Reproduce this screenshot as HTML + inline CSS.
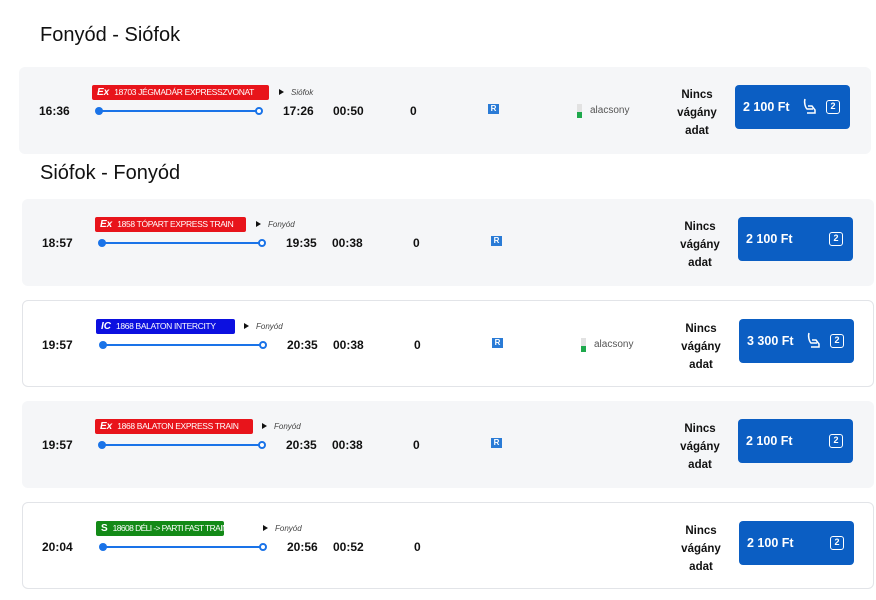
<!DOCTYPE html>
<html><head><meta charset="utf-8"><style>
*{margin:0;padding:0;box-sizing:border-box}
body{width:876px;height:600px;background:#fff;font-family:"Liberation Sans",sans-serif;position:relative;overflow:hidden;color:#111}
h1{position:absolute;font-weight:normal;font-size:20px;color:#111}
.card{position:absolute;width:852px;height:87px;border-radius:6px}
.g{background:#f5f6f8}
.w{background:#fff;border:1px solid #e2e4e8}
.card>*{position:absolute}
.t{font-size:12px;font-weight:bold;top:37px}
.badge{left:73px;top:18px;height:15px;border-radius:2px;color:#fff;font-size:8.5px;line-height:15px;padding-left:5px;white-space:nowrap;overflow:hidden;letter-spacing:-0.35px}
.badge b{font-style:italic;font-size:10px;margin-right:5px;letter-spacing:0}
.dest{top:18px;font-size:8px;font-style:italic;color:#444;line-height:15px}
.dest:before{content:"";display:inline-block;border-left:5px solid #111;border-top:3px solid transparent;border-bottom:3px solid transparent;margin-right:7px}
.line{left:79px;top:43px;width:161px;height:2px;background:#1a73e8}
.d1{left:76px;top:40px;width:8px;height:8px;border-radius:50%;background:#1a73e8}
.d2{left:236px;top:40px;width:8px;height:8px;border-radius:50%;background:#fff;border:2px solid #1a73e8}
.r{left:469px;top:37px;width:11px;height:10px;background:#2a7bd6;color:#fff;font-size:8px;font-weight:bold;text-align:center;line-height:10px}
.bar{left:558px;top:37px;width:5px;height:14px;background:#e2e2e2}
.bar:after{content:"";position:absolute;left:0;bottom:0;width:5px;height:6px;background:#1ea84c}
.al{left:571px;top:38px;font-size:10px;color:#555}
.nv{left:648px;top:19px;width:60px;text-align:center;font-size:11.5px;font-weight:bold;line-height:18px}
.btn{left:716px;top:18px;width:115px;height:44px;background:#0b5ec3;border-radius:4px;color:#fff;font-size:12.5px;font-weight:bold;line-height:44px;padding-left:8px}
.two{position:absolute;right:10px;top:15px;width:14px;height:14px;border:1.5px solid #fff;border-radius:3px;font-size:9px;line-height:11px;text-align:center}
.seat{position:absolute;left:68px;top:13px}
</style></head><body>
<h1 style="left:40px;top:24px">Fonyód - Siófok</h1>
<h1 style="left:40px;top:162px">Siófok - Fonyód</h1>

<div class="card g" style="left:19px;top:67px">
<div class="t" style="left:20px">16:36</div>
<div class="badge" style="background:#e8141b;width:177px"><b>Ex</b>18703 JÉGMADÁR EXPRESSZVONAT</div>
<div class="dest" style="left:260px">Siófok</div>
<div class="line"></div><div class="d1"></div><div class="d2"></div>
<div class="t" style="left:264px">17:26</div><div class="t" style="left:314px">00:50</div><div class="t" style="left:391px">0</div>
<div class="r">R</div><div class="bar"></div><div class="al">alacsony</div>
<div class="nv">Nincs<br>vágány<br>adat</div>
<div class="btn">2 100 Ft<svg class="seat" width="14" height="17" viewBox="0 0 14 17" fill="none" stroke="#fff" stroke-width="1.5"><path d="M2 1 C1 4 2 9 4 11 H10 M5 8 H9 L12 12 V15 H4"/></svg><span class="two">2</span></div>
</div>

<div class="card g" style="left:22px;top:199px">
<div class="t" style="left:20px">18:57</div>
<div class="badge" style="background:#e8141b;width:151px"><b>Ex</b>1858 TÓPART EXPRESS TRAIN</div>
<div class="dest" style="left:234px">Fonyód</div>
<div class="line"></div><div class="d1"></div><div class="d2"></div>
<div class="t" style="left:264px">19:35</div><div class="t" style="left:310px">00:38</div><div class="t" style="left:391px">0</div>
<div class="r">R</div>
<div class="nv">Nincs<br>vágány<br>adat</div>
<div class="btn">2 100 Ft<span class="two">2</span></div>
</div>

<div class="card w" style="left:22px;top:300px">
<div class="t" style="left:19px">19:57</div>
<div class="badge" style="background:#0c10e0;width:139px"><b>IC</b>1868 BALATON INTERCITY</div>
<div class="dest" style="left:221px">Fonyód</div>
<div class="line"></div><div class="d1"></div><div class="d2"></div>
<div class="t" style="left:264px">20:35</div><div class="t" style="left:310px">00:38</div><div class="t" style="left:391px">0</div>
<div class="r">R</div><div class="bar"></div><div class="al">alacsony</div>
<div class="nv">Nincs<br>vágány<br>adat</div>
<div class="btn">3 300 Ft<svg class="seat" width="14" height="17" viewBox="0 0 14 17" fill="none" stroke="#fff" stroke-width="1.5"><path d="M2 1 C1 4 2 9 4 11 H10 M5 8 H9 L12 12 V15 H4"/></svg><span class="two">2</span></div>
</div>

<div class="card g" style="left:22px;top:401px">
<div class="t" style="left:20px">19:57</div>
<div class="badge" style="background:#e8141b;width:158px"><b>Ex</b>1868 BALATON EXPRESS TRAIN</div>
<div class="dest" style="left:240px">Fonyód</div>
<div class="line"></div><div class="d1"></div><div class="d2"></div>
<div class="t" style="left:264px">20:35</div><div class="t" style="left:310px">00:38</div><div class="t" style="left:391px">0</div>
<div class="r">R</div>
<div class="nv">Nincs<br>vágány<br>adat</div>
<div class="btn">2 100 Ft<span class="two">2</span></div>
</div>

<div class="card w" style="left:22px;top:502px">
<div class="t" style="left:19px">20:04</div>
<div class="badge" style="background:#138a17;width:128px;letter-spacing:-0.6px"><b style="font-style:normal">S</b>18608 DÉLI -&gt; PARTI FAST TRAIN</div>
<div class="dest" style="left:240px">Fonyód</div>
<div class="line"></div><div class="d1"></div><div class="d2"></div>
<div class="t" style="left:264px">20:56</div><div class="t" style="left:310px">00:52</div><div class="t" style="left:391px">0</div>
<div class="nv">Nincs<br>vágány<br>adat</div>
<div class="btn">2 100 Ft<span class="two">2</span></div>
</div>
</body></html>
